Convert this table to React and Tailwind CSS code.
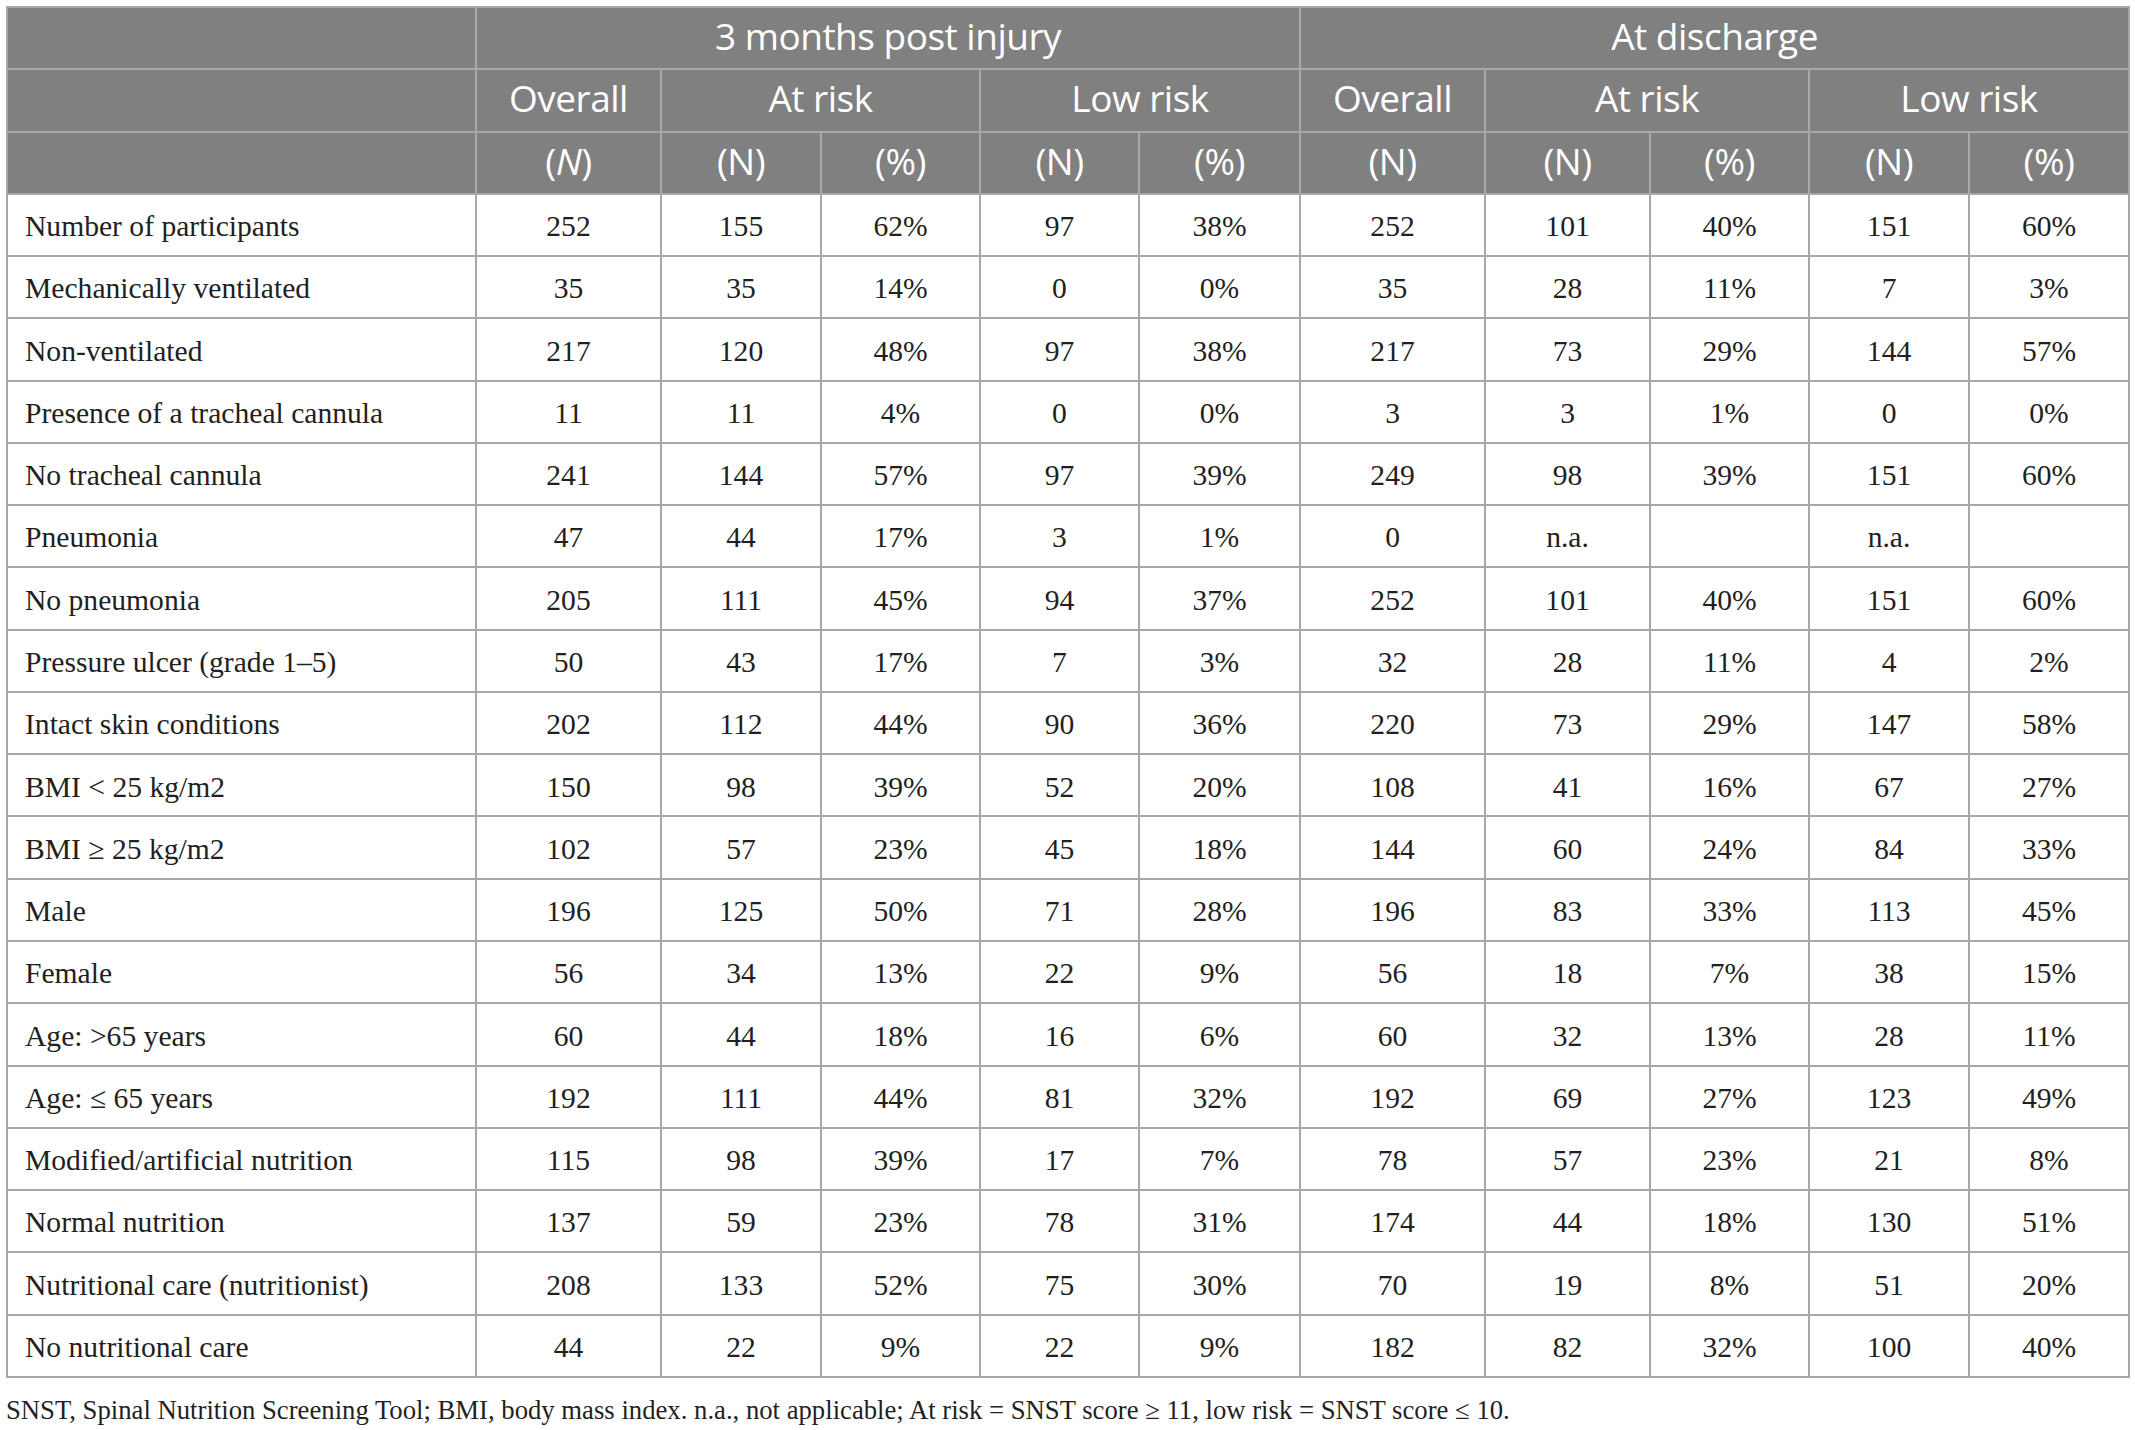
import React from "react";

const rows = [
  ["Number of participants", "252", "155", "62%", "97", "38%", "252", "101", "40%", "151", "60%"],
  ["Mechanically ventilated", "35", "35", "14%", "0", "0%", "35", "28", "11%", "7", "3%"],
  ["Non-ventilated", "217", "120", "48%", "97", "38%", "217", "73", "29%", "144", "57%"],
  ["Presence of a tracheal cannula", "11", "11", "4%", "0", "0%", "3", "3", "1%", "0", "0%"],
  ["No tracheal cannula", "241", "144", "57%", "97", "39%", "249", "98", "39%", "151", "60%"],
  ["Pneumonia", "47", "44", "17%", "3", "1%", "0", "n.a.", "", "n.a.", ""],
  ["No pneumonia", "205", "111", "45%", "94", "37%", "252", "101", "40%", "151", "60%"],
  ["Pressure ulcer (grade 1–5)", "50", "43", "17%", "7", "3%", "32", "28", "11%", "4", "2%"],
  ["Intact skin conditions", "202", "112", "44%", "90", "36%", "220", "73", "29%", "147", "58%"],
  ["BMI < 25 kg/m2", "150", "98", "39%", "52", "20%", "108", "41", "16%", "67", "27%"],
  ["BMI ≥ 25 kg/m2", "102", "57", "23%", "45", "18%", "144", "60", "24%", "84", "33%"],
  ["Male", "196", "125", "50%", "71", "28%", "196", "83", "33%", "113", "45%"],
  ["Female", "56", "34", "13%", "22", "9%", "56", "18", "7%", "38", "15%"],
  ["Age: >65 years", "60", "44", "18%", "16", "6%", "60", "32", "13%", "28", "11%"],
  ["Age: ≤ 65 years", "192", "111", "44%", "81", "32%", "192", "69", "27%", "123", "49%"],
  ["Modified/artificial nutrition", "115", "98", "39%", "17", "7%", "78", "57", "23%", "21", "8%"],
  ["Normal nutrition", "137", "59", "23%", "78", "31%", "174", "44", "18%", "130", "51%"],
  ["Nutritional care (nutritionist)", "208", "133", "52%", "75", "30%", "70", "19", "8%", "51", "20%"],
  ["No nutritional care", "44", "22", "9%", "22", "9%", "182", "82", "32%", "100", "40%"],
];

const widths = [469, 185, 160, 159, 159, 161, 185, 165, 159, 160, 160];

const th =
  "h-[62.27px] border-2 border-[#a8a8a8] bg-[#808080] px-0 pt-0 pb-[5px] text-center align-middle font-normal text-white";
const td = "h-[62.27px] border-2 border-[#a8a8a8] px-0 pt-[4px] pb-0 align-middle";

const App = () => {
  return (
    <div className="min-h-screen bg-white pl-[6px] pt-[6px]">
      <table className="w-[2122px] table-fixed border-collapse">
        <colgroup>
          {widths.map((w, i) => (
            <col key={i} style={{ width: w }} />
          ))}
        </colgroup>
        <thead className="font-['Open_Sans',sans-serif] text-[37px] leading-none tracking-[-0.5px]">
          <tr>
            <th className={th}></th>
            <th className={th} colSpan={5}>3 months post injury</th>
            <th className={th} colSpan={5}>At discharge</th>
          </tr>
          <tr>
            <th className={th}></th>
            <th className={th}>Overall</th>
            <th className={th} colSpan={2}>At risk</th>
            <th className={th} colSpan={2}>Low risk</th>
            <th className={th}>Overall</th>
            <th className={th} colSpan={2}>At risk</th>
            <th className={th} colSpan={2}>Low risk</th>
          </tr>
          <tr>
            <th className={th}></th>
            <th className={th}>
              (<span className="italic">N</span>)
            </th>
            <th className={th}>(N)</th>
            <th className={th}>(%)</th>
            <th className={th}>(N)</th>
            <th className={th}>(%)</th>
            <th className={th}>(N)</th>
            <th className={th}>(N)</th>
            <th className={th}>(%)</th>
            <th className={th}>(N)</th>
            <th className={th}>(%)</th>
          </tr>
        </thead>
        <tbody className="font-['Liberation_Serif',serif] text-[29.6px] leading-none text-[#231f20]">
          {rows.map((r) => (
            <tr key={r[0]}>
              {r.map((c, i) => (
                <td
                  key={i}
                  className={i === 0 ? `${td} pl-[17px] text-left` : `${td} text-center`}
                >
                  {c}
                </td>
              ))}
            </tr>
          ))}
        </tbody>
      </table>
      <p className="mt-[19px] font-['Liberation_Serif',serif] text-[26.7px] leading-none text-[#231f20]">
        SNST, Spinal Nutrition Screening Tool; BMI, body mass index. n.a., not
        applicable; At risk = SNST score ≥ 11, low risk = SNST score ≤ 10.
      </p>
    </div>
  );
};

export default App;
